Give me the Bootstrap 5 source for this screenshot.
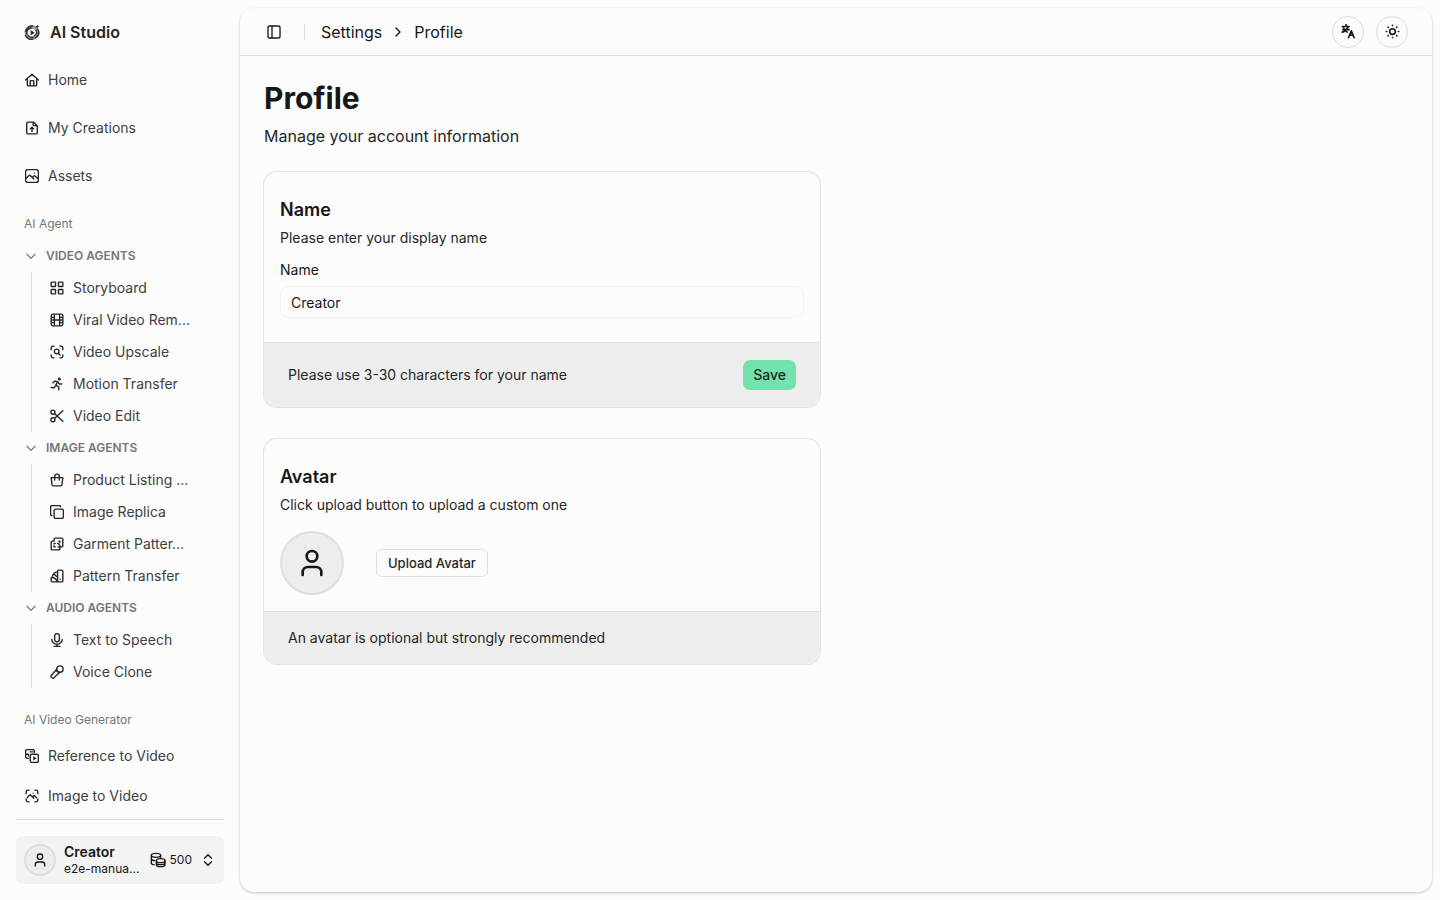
<!DOCTYPE html>
<html lang="en">
<head>
<meta charset="utf-8">
<meta name="viewport" content="width=device-width, initial-scale=1">
<title>Profile - AI Studio</title>
<link href="https://cdn.jsdelivr.net/npm/bootstrap@5.3.0/dist/css/bootstrap.min.css" rel="stylesheet">
<style>
:root{--ink:#171717;--soft:#404040;--faint:#757575;--line:#dfdfdf;--fill:#ededed;--page:#fcfcfc}
body{font-family:Inter,"Liberation Sans",sans-serif;font-size:14px;line-height:20px;color:var(--ink);background:var(--page)}
a{color:inherit;text-decoration:none}
svg{fill:none;stroke:currentColor;stroke-width:2;stroke-linecap:round;stroke-linejoin:round;flex:none;width:16px;height:16px}
.solid{fill:currentColor;stroke:none}
.side{width:240px;flex:none}
.side-scroll{min-height:0;overflow:hidden}
.brand{height:32px;margin:16px 16px 0;padding:0 8px;gap:10px;font-size:16px;color:#262626}
.item{height:32px;padding:0 8px;gap:8px;color:var(--soft);white-space:nowrap}
.item svg{color:#262626;stroke-width:2.4;width:14px;height:14px;margin:0 1px}
.group-label{height:32px;padding:0 8px;font-size:12px;color:var(--faint)}
.fold{width:100%;height:32px;padding:0 8px;gap:8px;border:0;background:none;font-size:12px;font-weight:600;color:var(--faint)}
.fold svg{width:14px;height:14px}
.tree{margin-left:15px;border-left:1px solid var(--line);padding-left:9px}
.side-foot{margin:0 16px;padding:16px 0;border-top:1px solid var(--line)}
.user{width:100%;height:48px;padding:8px;gap:8px;border:0;border-radius:8px;background:#f3f3f3;color:var(--ink)}
.face{border:2px solid var(--line);border-radius:50%;background:var(--fill);width:64px;height:64px}
.face svg{width:32px;height:32px}
.face-sm{width:32px;height:32px}
.face-sm svg{width:16px;height:16px}
.user-name{font-size:14px;line-height:18px;font-weight:600}
.user-text{font-size:12px;line-height:16px}
.updown{width:14px;height:14px;margin:0 1px;stroke-width:2.4}
.panel{margin:8px 8px 8px 0;border-radius:14px;box-shadow:0 1px 3px rgba(0,0,0,.17),0 1px 2px rgba(0,0,0,.08);min-width:0}
.topbar{height:48px;padding:0 24px;border-bottom:1px solid var(--line);font-size:16px}
.plain{border:0;background:none;padding:0;width:20px;height:32px;color:var(--ink)}
.rule{width:1px;height:16px;background:var(--line);margin:0 16px 0 20px}
.crumbs{gap:10px}
.crumbs svg{width:12px;height:12px;stroke-width:2.8}
.round{width:32px;height:32px;border:1px solid var(--line);border-radius:50%;background:var(--page);padding:0;color:var(--ink)}
.round svg{width:15px;height:15px;stroke-width:2.6}
h1{font-size:30px;line-height:36px;font-weight:700;margin:0 0 8px}
.intro{font-size:16px;line-height:24px;margin:0 0 24px;color:#262626}
.cards{--bs-gutter-x:32px}
.stack{gap:32px}
.box{border-radius:13px;box-shadow:0 0 0 1px #e3e3e3;overflow:hidden}
.box h2{font-size:18px;line-height:28px;font-weight:600;margin:0 0 4px}
.box p{margin:0;color:#262626}
.box-body{padding:24px 16px 16px}
.box-foot{padding:16px 24px;background:var(--fill);border-top:1px solid var(--line)}
.box-foot-tall{min-height:65px}
.field-label{display:block;margin:12px 0 6px}
.field{height:32px;padding:0 10px;font-size:14px;line-height:20px;border:1px solid #f3f3f3;border-radius:8px;background:var(--page);color:var(--ink)}
.btn-save{height:30px;padding:0 10px;font-size:14px;font-weight:500;line-height:20px;border:0;border-radius:7px;background:#72e3ad;color:#1e2723}
.btn-line{height:28px;padding:0 11px;font-size:13px;line-height:18px;font-weight:500;border:1px solid var(--line);border-radius:6px;background:var(--page);color:#262626}
</style>
</head>
<body>
<div class="d-flex vh-100">
  <aside class="side d-flex flex-column">
    <a href="#" class="brand d-flex align-items-center fw-semibold">
      <svg viewBox="0 0 24 24"><circle cx="12" cy="13" r="8.500" stroke-width="5" stroke="#999"/><path stroke="#333" stroke-width="2" d="M2 11Q5 3 13 3M4 15q-1-8 7-9M21 8q4 8-4 13M18 9q3 6-3 9M13 23q-8 1-11-6M14 20q-5 1-8-3"/><path class="solid" d="m10 9 6 4-6 4zM20 1l1 2 2 1-2 1-1 2-1-2-2-1 2-1z"/></svg>
      AI Studio
    </a>
    <nav class="side-scroll flex-grow-1 px-3 pt-3" aria-label="Main">
      <div class="d-flex flex-column gap-3">
        <a href="#" class="item d-flex align-items-center"><svg viewBox="0 0 24 24"><path d="m1 12 11-10 11 10M4 10v10a2 2 0 0 0 2 2h12a2 2 0 0 0 2-2V10M9 22v-8a1 1 0 0 1 1-1h4a1 1 0 0 1 1 1v8"/></svg>Home</a>
        <a href="#" class="item d-flex align-items-center"><svg viewBox="0 0 24 24"><path d="M14 2v5a1 1 0 0 0 1 1h6M21 8v12a2 2 0 0 1-2 2H5a2 2 0 0 1-2-2V4a2 2 0 0 1 2-2h10zM12 18v-7M9 13.500l3-3 3 3"/></svg>My Creations</a>
        <a href="#" class="item d-flex align-items-center"><svg viewBox="0 0 24 24"><rect x="1" y="1" width="22" height="22" rx="4"/><path d="m2 16 5-5q1-1 2 0l6 6M13 14l2-2q1-1 2 0l5 4M16 7h.1"/></svg>Assets</a>
      </div>
      <div class="group-label d-flex align-items-center mt-3">AI Agent</div>
      <button type="button" class="fold d-flex align-items-center"><svg viewBox="0 0 24 24"><path d="m5 9 7 7 7-7"/></svg>VIDEO AGENTS</button>
      <div class="tree">
        <a href="#" class="item d-flex align-items-center"><svg viewBox="0 0 24 24"><rect x="2" y="2" width="7.500" height="7.500" rx="1"/><rect x="14.500" y="2" width="7.500" height="7.500" rx="1"/><rect x="2" y="14.500" width="7.500" height="7.500" rx="1"/><rect x="14.500" y="14.500" width="7.500" height="7.500" rx="1"/></svg>Storyboard</a>
        <a href="#" class="item d-flex align-items-center"><svg viewBox="0 0 24 24"><rect x="2" y="2" width="20" height="20" rx="3"/><path d="M7.500 3v18M16.500 3v18M7.500 12h9M3 7.500h4M3 12h4M3 16.500h4M17 7.500h4M17 12h4M17 16.500h4"/></svg>Viral Video Rem...</a>
        <a href="#" class="item d-flex align-items-center"><svg viewBox="0 0 24 24"><path d="M2 8V5a3 3 0 0 1 3-3h2M17 2h2a3 3 0 0 1 3 3v3M22 17v2a3 3 0 0 1-3 3h-2M7 22H5a3 3 0 0 1-3-3v-2M14 14l3 3"/><circle cx="11.500" cy="11" r="4"/></svg>Video Upscale</a>
        <a href="#" class="item d-flex align-items-center"><svg viewBox="0 0 24 24"><circle class="solid" cx="16" cy="3.500" r="2.700"/><path d="M5 10l3-3 5 1-3 6 5 3v5M2 18l5 .5 2-3M13 8l3 4h4"/></svg>Motion Transfer</a>
        <a href="#" class="item d-flex align-items-center"><svg viewBox="0 0 24 24"><circle cx="5" cy="5.500" r="3.500"/><circle cx="5" cy="18.500" r="3.500"/><path d="M8 8 22 21M8 16 22 3"/></svg>Video Edit</a>
      </div>
      <button type="button" class="fold d-flex align-items-center"><svg viewBox="0 0 24 24"><path d="m5 9 7 7 7-7"/></svg>IMAGE AGENTS</button>
      <div class="tree">
        <a href="#" class="item d-flex align-items-center"><svg viewBox="0 0 24 24"><path d="M2 8h20l-1.500 12a3 3 0 0 1-3 2h-11a3 3 0 0 1-3-2zM8 12V6a4 4 0 0 1 8 0v6"/></svg>Product Listing ...</a>
        <a href="#" class="item d-flex align-items-center"><svg viewBox="0 0 24 24"><rect x="7" y="7" width="16" height="16" rx="3"/><path d="M3 18a2 2 0 0 1-2-2V4a3 3 0 0 1 3-3h12a2 2 0 0 1 2 2"/></svg>Image Replica</a>
        <a href="#" class="item d-flex align-items-center"><svg viewBox="0 0 24 24"><path d="M7 7V4a2 2 0 0 1 2-2h11a2 2 0 0 1 2 2v11a2 2 0 0 1-2 2h-3v3a2 2 0 0 1-2 2H4a2 2 0 0 1-2-2V9a2 2 0 0 1 2-2zM7 12v-1h2M15 7h2v2M7 15v2h2M14 17h3v-3M13 11h2v2"/></svg>Garment Patter...</a>
        <a href="#" class="item d-flex align-items-center"><svg viewBox="0 0 24 24"><path d="M13 20V4a2 2 0 0 1 2-2h5a2 2 0 0 1 2 2v16a2 2 0 0 1-2 2h-5a2 2 0 0 1-2-2zM13 5Q5 6 4 14M2 16v-1q6-2 11 7H4a2 2 0 0 1-2-2zM7 9l6 5M17.500 17.500h.1"/></svg>Pattern Transfer</a>
      </div>
      <button type="button" class="fold d-flex align-items-center"><svg viewBox="0 0 24 24"><path d="m5 9 7 7 7-7"/></svg>AUDIO AGENTS</button>
      <div class="tree">
        <a href="#" class="item d-flex align-items-center"><svg viewBox="0 0 24 24"><rect x="8" y="1" width="8" height="14" rx="4"/><path d="M3 11a9 8 0 0 0 18 0M12 19v4M7 23h10"/></svg>Text to Speech</a>
        <a href="#" class="item d-flex align-items-center"><svg viewBox="0 0 24 24"><circle cx="17" cy="7" r="5.500"/><path d="M12 7 3 17q-3 2 0 4.500t4 0L17 12.500M11 9l4 4"/></svg>Voice Clone</a>
      </div>
      <div class="group-label d-flex align-items-center mt-3 mb-1">AI Video Generator</div>
      <div class="d-flex flex-column gap-2">
        <a href="#" class="item d-flex align-items-center"><svg viewBox="0 0 24 24"><rect x="9" y="9" width="14" height="14" rx="3"/><path d="M6 16H4a3 3 0 0 1-3-3V4a3 3 0 0 1 3-3h9a3 3 0 0 1 3 3v2M2 9h4M9 5h4M6 12V9"/><path class="solid" d="m14 12.500 6 3.500-6 3.500z"/></svg>Reference to Video</a>
        <a href="#" class="item d-flex align-items-center"><svg viewBox="0 0 24 24"><path d="M2 8V5a3 3 0 0 1 3-3h2M17 2h2a3 3 0 0 1 3 3v3M22 17v2a3 3 0 0 1-3 3h-2M7 22H5a3 3 0 0 1-3-3v-2M4 15l3-4 2-1 6 6M13 13l3-2 4 4M14 7h.1"/></svg>Image to Video</a>
      </div>
    </nav>
    <div class="side-foot">
      <button type="button" class="user d-flex align-items-center text-start">
        <span class="face face-sm d-flex align-items-center justify-content-center flex-shrink-0"><svg viewBox="0 0 24 24"><circle cx="12" cy="7" r="4"/><path d="M5 21v-2a4 4 0 0 1 4-4h6a4 4 0 0 1 4 4v2"/></svg></span>
        <span class="flex-grow-1"><span class="user-name d-block">Creator</span><span class="user-text d-block">e2e-manua...</span></span>
        <span class="user-text d-flex align-items-center gap-1"><svg viewBox="0 0 24 24"><ellipse cx="9" cy="5" rx="7" ry="3"/><path d="M2 5v12q1 2 4 2M16 5v3M2 11q2 2 5 2"/><ellipse cx="16" cy="13" rx="6.500" ry="3"/><path d="M9.500 13v6c0 4 13 4 13 0v-6M9.500 16c0 4 13 4 13 0"/></svg>500</span>
        <svg class="updown" viewBox="0 0 24 24"><path d="m6 9 6-6 6 6M6 15l6 6 6-6"/></svg>
      </button>
    </div>
  </aside>
  <main class="panel flex-grow-1">
    <header class="topbar d-flex align-items-center">
      <button type="button" class="plain d-flex align-items-center justify-content-center" aria-label="Toggle sidebar"><svg viewBox="0 0 24 24"><rect x="3" y="3" width="18" height="18" rx="2"/><path d="M9 3v18"/></svg></button>
      <span class="rule"></span>
      <nav class="crumbs d-flex align-items-center" aria-label="Breadcrumb"><a href="#">Settings</a><svg viewBox="0 0 24 24"><path d="m8 4 8 8-8 8"/></svg><span>Profile</span></nav>
      <div class="d-flex ms-auto" style="gap:12px">
        <button type="button" class="round d-flex align-items-center justify-content-center" aria-label="Language"><svg viewBox="0 0 24 24"><path d="M2 4h11M8 1v3M3 9h10M11 5Q9 11 2 13M4 6q2 5 6 7M12 22l4.500-11L21 22M14 18h5"/></svg></button>
        <button type="button" class="round d-flex align-items-center justify-content-center" aria-label="Theme"><svg viewBox="0 0 24 24"><circle cx="12" cy="12" r="4.500"/><path d="M12 2v.5M12 21.500v.5M2 12h.5M21.500 12h.5M5 5l.3.3M18.700 18.700l.3.3M5 19l.3-.3M18.700 5.300l.3-.3"/></svg></button>
      </div>
    </header>
    <div class="p-4">
      <h1>Profile</h1>
      <p class="intro">Manage your account information</p>
      <div class="row cards">
        <div class="stack col-6 d-flex flex-column">
          <form class="box">
            <div class="box-body pb-4">
              <h2>Name</h2>
              <p>Please enter your display name</p>
              <label for="display-name" class="field-label">Name</label>
              <input id="display-name" class="field form-control" type="text" value="Creator">
            </div>
            <div class="box-foot box-foot-tall d-flex align-items-center justify-content-between">
              <p>Please use 3-30 characters for your name</p>
              <button type="submit" class="btn-save">Save</button>
            </div>
          </form>
          <section class="box">
            <div class="box-body">
              <h2>Avatar</h2>
              <p>Click upload button to upload a custom one</p>
              <div class="stack d-flex align-items-center mt-3">
                <span class="face d-flex align-items-center justify-content-center"><svg viewBox="0 0 24 24"><circle cx="12" cy="7" r="4"/><path d="M5 21v-2a4 4 0 0 1 4-4h6a4 4 0 0 1 4 4v2"/></svg></span>
                <button type="button" class="btn-line">Upload Avatar</button>
              </div>
            </div>
            <div class="box-foot"><p>An avatar is optional but strongly recommended</p></div>
          </section>
        </div>
      </div>
    </div>
  </main>
</div>
<script src="https://cdn.jsdelivr.net/npm/bootstrap@5.3.0/dist/js/bootstrap.bundle.min.js"></script>
</body>
</html>
